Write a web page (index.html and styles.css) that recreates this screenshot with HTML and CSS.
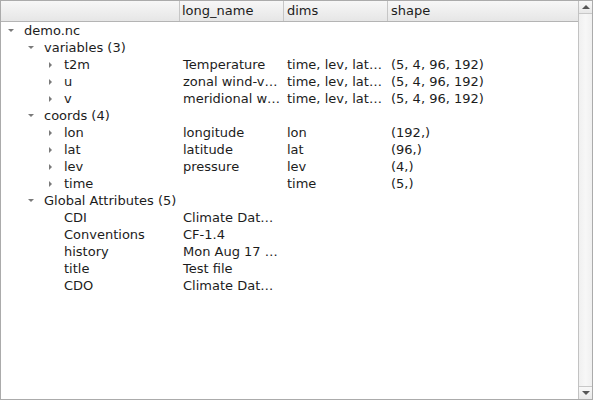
FILE: index.html
```html
<!DOCTYPE html>
<html>
<head>
<meta charset="utf-8">
<link rel="stylesheet" href="styles.css">
</head>
<body>
<div class="window">
  <div class="main">
    <div class="header">
      <div class="hcell c1"></div>
      <div class="hcell c2">long_name</div>
      <div class="hcell c3">dims</div>
      <div class="hcell c4">shape</div>
    </div>
    <div class="body">
      <div class="row"><div class="cell c1 l1"><span class="tw down"></span>demo.nc</div></div>
      <div class="row"><div class="cell c1 l2"><span class="tw down"></span>variables (3)</div></div>
      <div class="row"><div class="cell c1 l3"><span class="tw right"></span>t2m</div><div class="cell c2">Temperature</div><div class="cell c3">time, lev, lat…</div><div class="cell c4">(5, 4, 96, 192)</div></div>
      <div class="row"><div class="cell c1 l3"><span class="tw right"></span>u</div><div class="cell c2">zonal wind-v…</div><div class="cell c3">time, lev, lat…</div><div class="cell c4">(5, 4, 96, 192)</div></div>
      <div class="row"><div class="cell c1 l3"><span class="tw right"></span>v</div><div class="cell c2">meridional w…</div><div class="cell c3">time, lev, lat…</div><div class="cell c4">(5, 4, 96, 192)</div></div>
      <div class="row"><div class="cell c1 l2"><span class="tw down"></span>coords (4)</div></div>
      <div class="row"><div class="cell c1 l3"><span class="tw right"></span>lon</div><div class="cell c2">longitude</div><div class="cell c3">lon</div><div class="cell c4">(192,)</div></div>
      <div class="row"><div class="cell c1 l3"><span class="tw right"></span>lat</div><div class="cell c2">latitude</div><div class="cell c3">lat</div><div class="cell c4">(96,)</div></div>
      <div class="row"><div class="cell c1 l3"><span class="tw right"></span>lev</div><div class="cell c2">pressure</div><div class="cell c3">lev</div><div class="cell c4">(4,)</div></div>
      <div class="row"><div class="cell c1 l3"><span class="tw right"></span>time</div><div class="cell c2"></div><div class="cell c3">time</div><div class="cell c4">(5,)</div></div>
      <div class="row"><div class="cell c1 l2"><span class="tw down"></span>Global Attributes (5)</div></div>
      <div class="row"><div class="cell c1 l3"><span class="tw none"></span>CDI</div><div class="cell c2">Climate Dat…</div></div>
      <div class="row"><div class="cell c1 l3"><span class="tw none"></span>Conventions</div><div class="cell c2">CF-1.4</div></div>
      <div class="row"><div class="cell c1 l3"><span class="tw none"></span>history</div><div class="cell c2">Mon Aug 17 …</div></div>
      <div class="row"><div class="cell c1 l3"><span class="tw none"></span>title</div><div class="cell c2">Test file</div></div>
      <div class="row"><div class="cell c1 l3"><span class="tw none"></span>CDO</div><div class="cell c2">Climate Dat…</div></div>
    </div>
  </div>
  <div class="scrollbar">
    <div class="sbtn up"><span class="arrow-up"></span></div>
    <div class="strack"></div>
    <div class="sbtn dn"><span class="arrow-dn"></span></div>
  </div>
</div>
</body>
</html>
```
FILE: styles.css
```css
html, body {
  margin: 0;
  padding: 0;
  background: #ffffff;
}
body {
  font-family: "DejaVu Sans", sans-serif;
  font-size: 13px;
  color: #1c1c1c;
}
.window {
  width: 593px;
  height: 400px;
  box-sizing: border-box;
  border: 1px solid #ababab;
  display: flex;
  overflow: hidden;
}
.main {
  flex: 1;
  display: flex;
  flex-direction: column;
  min-width: 0;
}
.header {
  height: 20px;
  display: flex;
  border-bottom: 1px solid #b4b4b4;
  background: linear-gradient(#f7f7f7, #e6e6e6);
}
.hcell {
  box-sizing: border-box;
  padding-left: 3px;
  line-height: 20px;
  border-right: 1px solid #c6c6c6;
  white-space: nowrap;
  overflow: hidden;
}
.hcell.c2 { padding-left: 2px; }
.hcell.c4 { border-right: none; }
.c1 { width: 179px; flex: none; }
.c2 { width: 104px; flex: none; }
.c3 { width: 104px; flex: none; }
.c4 { flex: 1; }
.body {
  flex: 1;
}
.row {
  height: 17px;
  display: flex;
  align-items: center;
}
.cell {
  box-sizing: border-box;
  white-space: nowrap;
  overflow: hidden;
  line-height: 17px;
  display: flex;
  align-items: center;
}
.cell.c2, .cell.c3, .cell.c4 { padding-left: 3px; }
.l1 { padding-left: 5px; }
.l2 { padding-left: 25px; }
.l3 { padding-left: 45px; }
.tw {
  width: 18px;
  height: 17px;
  flex: none;
  position: relative;
}
.tw.down::before {
  content: "";
  position: absolute;
  left: 2px;
  top: 7px;
  border-left: 3px solid transparent;
  border-right: 3px solid transparent;
  border-top: 3px solid #7a7a7a;
}
.tw.right::before {
  content: "";
  position: absolute;
  left: 3px;
  top: 6px;
  border-top: 3px solid transparent;
  border-bottom: 3px solid transparent;
  border-left: 3px solid #7a7a7a;
}
.scrollbar {
  width: 13px;
  flex: none;
  display: flex;
  flex-direction: column;
  border-left: 1px solid #c2c2c2;
  background: #f1f1f1;
}
.sbtn {
  height: 12px;
  flex: none;
  display: flex;
  align-items: center;
  justify-content: center;
  background: linear-gradient(#f8f8f8, #e8e8e8);
}
.sbtn.up { border-bottom: 1px solid #c8c8c8; }
.sbtn.dn { border-top: 1px solid #c8c8c8; }
.strack {
  flex: 1;
  background: linear-gradient(90deg, #f0f0f0, #f7f7f7 50%, #f0f0f0);
}
.arrow-up {
  border-left: 4px solid transparent;
  border-right: 4px solid transparent;
  border-bottom: 4px solid #555;
}
.arrow-dn {
  border-left: 4px solid transparent;
  border-right: 4px solid transparent;
  border-top: 4px solid #555;
}
```
